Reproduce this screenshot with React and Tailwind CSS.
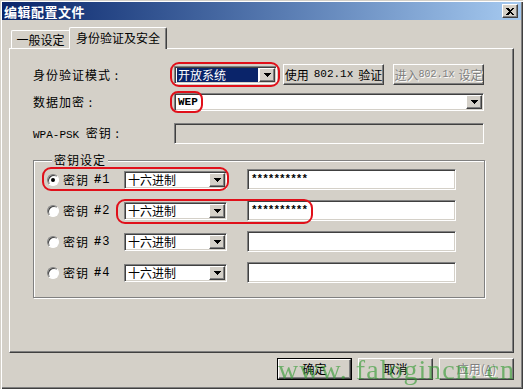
import React from "react";

const raised =
  "border border-t-white border-l-white border-r-[#404040] border-b-[#404040] shadow-[inset_-1px_-1px_0_#808080]";
const sunken =
  "border border-t-[#808080] border-l-[#808080] border-r-white border-b-white shadow-[inset_1px_1px_0_#404040,inset_-1px_-1px_0_#d4d0c8]";
const mono = "font-['Liberation_Mono',monospace]";
const disabledText = "text-[#808080] [text-shadow:1px_1px_0_#fff]";

function Arrow() {
  return (
    <div className={`w-[16px] h-full flex items-center justify-center bg-[#d4d0c8] ${raised}`}>
      <svg width="7" height="4" viewBox="0 0 7 4" shapeRendering="crispEdges">
        <rect x="0" y="0" width="7" height="1" fill="#000" />
        <rect x="1" y="1" width="5" height="1" fill="#000" />
        <rect x="2" y="2" width="3" height="1" fill="#000" />
        <rect x="3" y="3" width="1" height="1" fill="#000" />
      </svg>
    </div>
  );
}

function Combo({ className, children, selected }) {
  return (
    <div className={`flex h-[18px] bg-white p-[1px] ${sunken} ${className}`}>
      <div className="flex-1 flex items-center pl-[1px] pr-[1px]">
        <span
          className={`flex-1 h-full flex items-center pl-[1px] leading-none ${
            selected ? "bg-[#0a246a] text-white" : ""
          }`}
        >
          {children}
        </span>
      </div>
      <Arrow />
    </div>
  );
}

function Btn({ className, children, disabled, isDefault }) {
  const inner = (
    <div
      className={`h-full w-full flex items-center justify-center whitespace-nowrap overflow-hidden bg-[#d4d0c8] ${raised} ${
        disabled ? disabledText : ""
      }`}
    >
      {children}
    </div>
  );
  if (isDefault) {
    return <div className={`border border-black ${className}`}>{inner}</div>;
  }
  return <div className={className}>{inner}</div>;
}

function Radio({ checked }) {
  return (
    <div className="w-[12px] h-[12px] rounded-full bg-white border border-t-[#808080] border-l-[#808080] border-r-white border-b-white shadow-[inset_1px_1px_0_#404040] flex items-center justify-center">
      {checked && <div className="w-[4px] h-[4px] rounded-full bg-black" />}
    </div>
  );
}

const keys = [
  { n: 1, value: "**********", checked: true },
  { n: 2, value: "**********" },
  { n: 3, value: "" },
  { n: 4, value: "" },
];

export default function App() {
  return (
    <div className="relative w-[523px] h-[389px] overflow-hidden bg-[#d4d0c8] pt-[2px] px-[2px] text-[12px] text-black font-['Noto_Sans_CJK_SC',sans-serif] shadow-[inset_1px_1px_0_#d4d0c8,inset_2px_2px_0_#fff,inset_-1px_-1px_0_#404040,inset_-2px_-2px_0_#808080]">
      {/* title bar */}
      <div className="h-[18px] flex items-center justify-between bg-gradient-to-r from-[#0a246a] to-[#a6caf0]">
        <span className="pl-[2px] text-white font-bold text-[13px] leading-none tracking-[0.5px]">
          编辑配置文件
        </span>
        <div className={`mr-[3px] w-[16px] h-[14px] flex items-center justify-center bg-[#d4d0c8] ${raised}`}>
          <svg width="8" height="7" viewBox="0 0 8 7" shapeRendering="crispEdges">
            <path d="M0 0h2l2 2 2-2h2L5 3.5 8 7H6L4 5 2 7H0l3-3.5z" fill="#000" />
          </svg>
        </div>
      </div>

      {/* tabs */}
      <div className="ml-[7px] mt-[7px] h-[21px] flex items-end">
        <div className="ml-[2px] w-[58px] h-[18px] flex items-center justify-center border-t border-l border-t-white border-l-white rounded-tl-[2px] leading-none">
          一般设定
        </div>
        <div className="relative z-10 -mb-[1px] w-[98px] h-[22px] flex items-center justify-center bg-[#d4d0c8] border-t border-l border-r border-t-white border-l-white border-r-[#404040] shadow-[inset_-1px_0_0_#808080] rounded-t-[2px] leading-none pb-[2px]">
          身份验证及安全
        </div>
      </div>

      {/* panel */}
      <div className="ml-[7px] w-[505px] h-[305px] pt-[15px] pl-[23px] border border-t-white border-l-white border-r-[#404040] border-b-[#404040] shadow-[inset_-1px_-1px_0_#808080]">
        <div className="flex items-center h-[21px]">
          <span className="w-[141px] tracking-[1px]">身份验证模式 :</span>
          <Combo className="w-[103px]" selected>
            开放系统
          </Combo>
          <Btn className="ml-[6px] w-[101px] h-[21px]">
            <span>使用</span>
            <span className={`${mono} text-[11px] mx-[5px]`}>802.1x</span>
            <span>验证</span>
          </Btn>
          <Btn className="ml-[9px] w-[91px] h-[21px]" disabled>
            <span>进入</span>
            <span className={`${mono} text-[10px] mr-[4px]`}>802.1x</span>
            <span>设定</span>
          </Btn>
        </div>

        <div className="flex items-center mt-[8px] h-[18px]">
          <span className="w-[141px] tracking-[1px]">数据加密 :</span>
          <Combo className="w-[310px]">
            <span className={`${mono} text-[11px] font-bold`}>WEP</span>
          </Combo>
        </div>

        <div className="flex items-center mt-[12px] h-[21px]">
          <span className="w-[141px]">
            <span className={`${mono} text-[11px]`}>WPA-PSK </span>
            <span className="tracking-[1px]">密钥 :</span>
          </span>
          <div className={`w-[310px] h-[21px] bg-[#d4d0c8] ${sunken}`} />
        </div>

        <fieldset className="mt-[9px] w-[452px] border border-[#808080] shadow-[inset_1px_1px_0_#fff,1px_1px_0_#fff] pl-[13px] pt-[2px] pb-[14px]">
          <legend className="ml-[5px] px-[2px] bg-[#d4d0c8] leading-[14px] tracking-[1px]">密钥设定</legend>
          <div className="flex flex-col gap-[10px]">
            {keys.map((k) => (
              <div key={k.n} className="flex items-center h-[21px]">
                <Radio checked={k.checked} />
                <span className="ml-[4px] w-[61px] flex items-center">
                  <span className="tracking-[1px]">密钥</span>
                  <span className={`${mono} font-bold ml-[5px]`}>#</span>
                  <span className={`${mono} ml-[1px]`}>{k.n}</span>
                </span>
                <Combo className="w-[103px]">十六进制</Combo>
                <div className={`ml-[20px] w-[209px] h-[21px] bg-white flex items-center pl-[3px] ${sunken}`}>
                  <span className={`${mono} text-[11px] font-bold tracking-[-1px]`}>{k.value}</span>
                </div>
              </div>
            ))}
          </div>
        </fieldset>
      </div>

      {/* bottom buttons */}
      <div className="ml-[7px] w-[505px] mt-[5px] flex justify-end gap-[6px]">
        <Btn className="w-[75px] h-[22px]" isDefault>
          确定
        </Btn>
        <Btn className="w-[75px] h-[22px]">取消</Btn>
        <Btn className="w-[75px] h-[22px]" disabled>
          应用(<span className="underline">A</span>)
        </Btn>
      </div>

      {/* red annotations */}
      <div className="absolute left-[170px] top-[62px] w-[110px] h-[25px] border-2 border-[#e0101a] rounded-[9px] pointer-events-none" />
      <div className="absolute left-[170px] top-[91px] w-[33px] h-[22px] border-2 border-[#e0101a] rounded-[8px] pointer-events-none" />
      <div className="absolute left-[42px] top-[167px] w-[187px] h-[24px] border-2 border-[#e0101a] rounded-[9px] pointer-events-none" />
      <div className="absolute left-[116px] top-[199px] w-[197px] h-[25px] border-2 border-[#e0101a] rounded-[9px] pointer-events-none" />

      {/* watermark */}
      <div className="absolute left-[278px] top-[356px] font-['Liberation_Serif',serif] text-[28px] leading-none text-[#2f9a2f] opacity-60 tracking-[1px] pointer-events-none whitespace-nowrap">
        www. falogincn. cn
      </div>
    </div>
  );
}
